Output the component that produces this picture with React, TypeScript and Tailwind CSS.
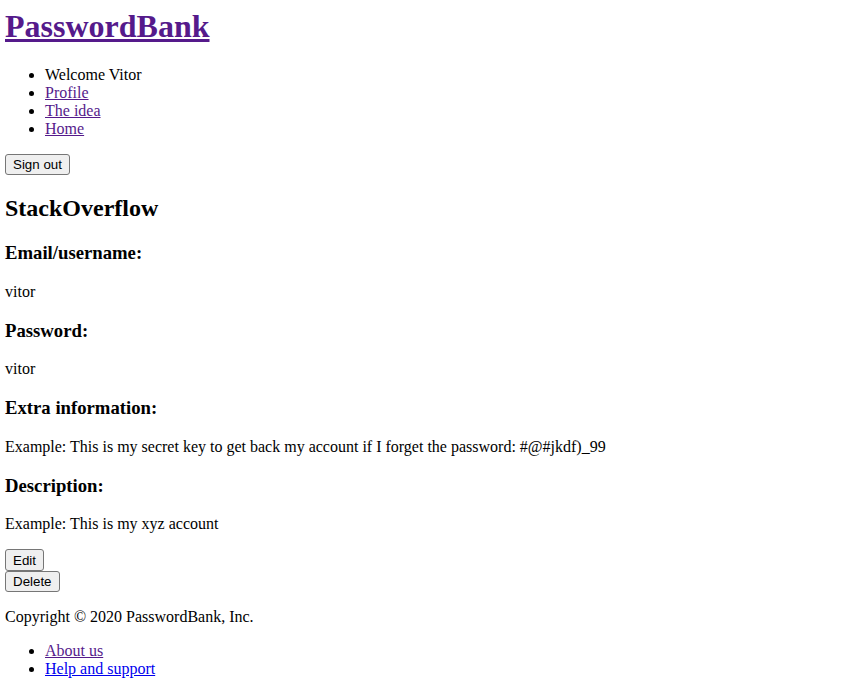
import React from "react";

const btn =
  "block bg-[#efefef] border border-[#767676] rounded-[3px] px-[7px] py-[2.25px] text-[13.333px] leading-[normal] text-black font-['Liberation_Sans',Arial,sans-serif]";

export default function App() {
  return (
    <div className="min-h-screen bg-white pl-[5px] pt-[7.5px] text-black text-[16px] leading-[normal] font-['Liberation_Serif','Times_New_Roman',serif]">
      {/* Header */}
      <header>
        <h1 className="text-[32px] font-bold mb-[21.44px]">
          <a href="#" className="text-[#551a8b] underline">
            PasswordBank
          </a>
        </h1>
        <ul className="list-disc pl-10 my-4">
          <li>Welcome Vitor</li>
          <li>
            <a href="#" className="text-[#551a8b] underline">Profile</a>
          </li>
          <li>
            <a href="#" className="text-[#551a8b] underline">The idea</a>
          </li>
          <li>
            <a href="#" className="text-[#551a8b] underline">Home</a>
          </li>
        </ul>
        <div>
          <button className={btn}>Sign out</button>
        </div>
      </header>

      {/* Account details */}
      <main>
        <h2 className="text-[24px] font-bold my-[19.92px]">StackOverflow</h2>
        <h3 className="text-[18.72px] font-bold my-[18.72px]">Email/username:</h3>
        <p className="my-4">vitor</p>
        <h3 className="text-[18.72px] font-bold my-[18.72px]">Password:</h3>
        <p className="my-4">vitor</p>
        <h3 className="text-[18.72px] font-bold my-[18.72px]">Extra information:</h3>
        <p className="my-4">
          Example: This is my secret key to get back my account if I forget the password: #@#jkdf)_99
        </p>
        <h3 className="text-[18.72px] font-bold my-[18.72px]">Description:</h3>
        <p className="my-4">Example: This is my xyz account</p>
        <form>
          <button type="button" className={btn}>Edit</button>
        </form>
        <form>
          <button type="button" className={btn}>Delete</button>
        </form>
      </main>

      {/* Footer */}
      <footer>
        <p className="my-4">Copyright © 2020 PasswordBank, Inc.</p>
        <ul className="list-disc pl-10 my-4">
          <li>
            <a href="#" className="text-[#551a8b] underline">About us</a>
          </li>
          <li>
            <a href="#" className="text-[#0000ee] underline">Help and support</a>
          </li>
        </ul>
      </footer>
    </div>
  );
}
